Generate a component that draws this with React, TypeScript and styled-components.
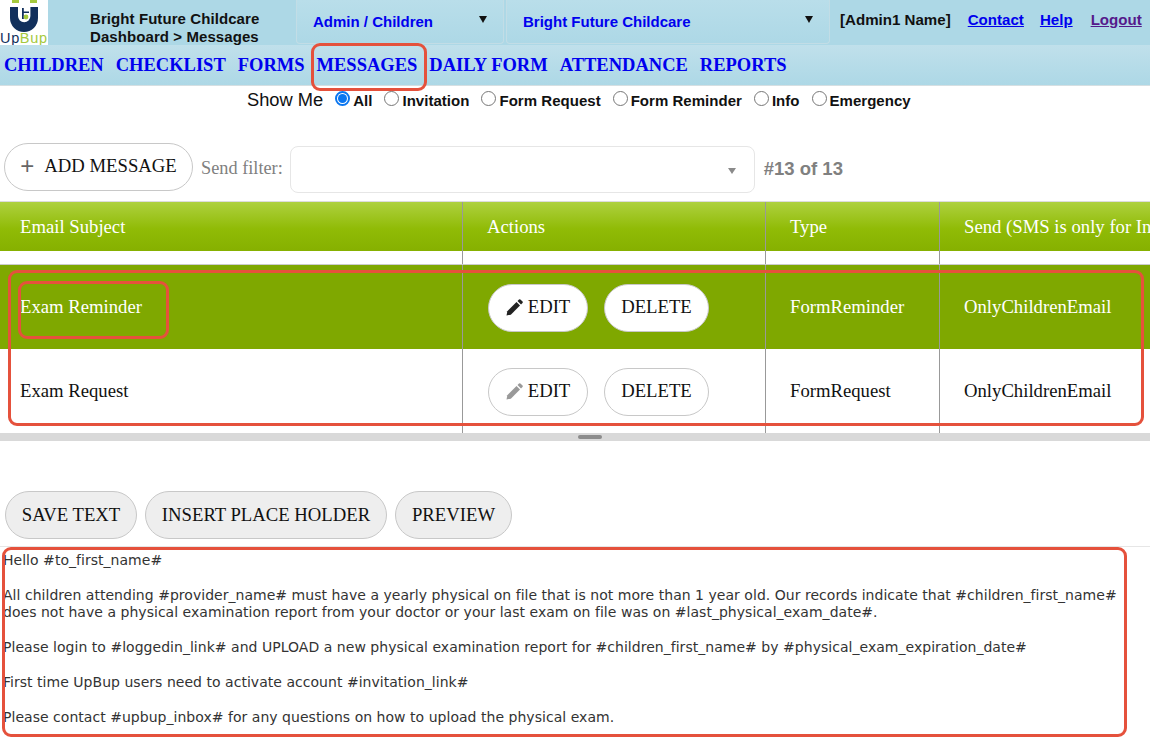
import React from 'react';
import styled, { createGlobalStyle } from 'styled-components';

const Global = createGlobalStyle`
  html, body { margin: 0; padding: 0; background: #fff; }
  body { width: 1150px; height: 747px; overflow: hidden; font-family: "Liberation Serif", serif; }
`;
const Page = styled.div`position: relative; width: 1150px; height: 747px; overflow: hidden;`;
const TopBar = styled.header`display: flex; height: 45px; background: #add8e6; font-family: "Liberation Sans", sans-serif; font-weight: 700; font-size: 15px;`;
const LogoBox = styled.div`width: 48px; height: 45px; background: #fff; flex: none; display: flex; align-items: flex-start; justify-content: center;`;
const Crumbs = styled.div`width: 206px; margin-left: 42px; padding-top: 10px; line-height: 18px; color: #111; flex: none; font-size: 15px; letter-spacing: 0.08px;`;
const Select = styled.div<{ $w: number }>`
  width: ${p => p.$w}px; height: 44px; box-sizing: border-box; flex: none; margin-right: 2px;
  display: flex; align-items: center; justify-content: space-between;
  padding: 0 16px 0 16px; color: #0000ee; border: 1px solid #c2dde6; border-top: 0; border-radius: 0 0 4px 4px;
  background: linear-gradient(#b9deea, #add8e6); font-size: 15px;
`;
const Caret = styled.span`width: 0; height: 0; border-left: 4.5px solid transparent; border-right: 4.5px solid transparent; border-top: 7px solid #111; margin-top: -5px;`;
const UserArea = styled.div`display: flex; align-items: center; height: 38px; margin-left: 8px; font-size: 15.1px; color: #111; white-space: nowrap;`;
const TopLink = styled.a<{ $visited?: boolean; $gap: number }>`margin-left: ${p => p.$gap}px; color: ${p => p.$visited ? '#551a8b' : '#0000ee'}; text-decoration: underline;`;
const Nav = styled.nav`
  height: 41px; display: flex; align-items: center; gap: 12px; padding: 0 0 0 4px; box-sizing: border-box;
  background: linear-gradient(#c0e0eb, #add8e6); border-bottom: 1px solid #d5dfe2;
  font-weight: 700; font-size: 18.5px; color: #0000ee; white-space: nowrap;
`;
const Filter = styled.div`
  height: 28px; display: flex; align-items: center; padding-left: 247px; font-family: "Liberation Sans", sans-serif;
  font-size: 15px; font-weight: 700; color: #111; white-space: nowrap; letter-spacing: 0.03px;
`;
const ShowMe = styled.span`font-size: 18.3px; font-weight: 400; margin-right: 12px; letter-spacing: 0;`;
const Radio = styled.span<{ $on?: boolean }>`
  width: 15px; height: 15px; box-sizing: border-box; border-radius: 50%; flex: none; margin: -3px 3px 0 0;
  border: ${p => p.$on ? '2px solid #0a76f0' : '1px solid #777'}; background: #fff;
  display: inline-flex; align-items: center; justify-content: center;
  &::after { content: ''; width: 9px; height: 9px; border-radius: 50%; background: ${p => p.$on ? '#0a76f0' : 'transparent'}; }
`;
const RadioLabel = styled.span`margin-right: 12px;`;
const Toolbar = styled.div`height: 48px; margin-top: 29px; padding-left: 4px; display: flex; align-items: center;`;
const Pill = styled.button<{ $grey?: boolean; $w: number }>`
  width: ${p => p.$w}px; height: 48px; flex: none; padding: 0 0 ${p => p.$grey ? 0 : 2}px; box-sizing: border-box;
  border: 1px solid #c8c8c8; border-radius: 24px; background: ${p => p.$grey ? '#eeeeee' : '#fff'};
  font-family: "Liberation Serif", serif; font-size: 18.7px; color: #111; white-space: nowrap;
  display: inline-flex; align-items: center; justify-content: center; gap: 5px;
`;
const Plus = styled.span`color: #666; font-size: 24px; line-height: 20px; margin-right: 5px; font-family: "Liberation Sans", sans-serif; font-weight: 300;`;
const FilterLabel = styled.span`font-size: 18.3px; color: #808080; margin: 3px 7px 0 8px;`;
const FilterBox = styled.div`
  width: 465px; height: 47px; box-sizing: border-box; border: 1px solid #e6e6e6; border-radius: 8px;
  display: flex; align-items: center; justify-content: flex-end; padding-right: 18px; margin-top: 4px;
`;
const SmallCaret = styled.span`width: 0; height: 0; border-left: 4.5px solid transparent; border-right: 4.5px solid transparent; border-top: 6px solid #8a8a8a; margin-top: 3px;`;
const Count = styled.span`font-family: "Liberation Sans", sans-serif; font-weight: 700; font-size: 18.5px; color: #808080; margin: 3px 0 0 9px; white-space: nowrap;`;
const Columns = 'grid-template-columns: 462px 303px 174px 300px;';
const TableHead = styled.div`
  display: grid; ${Columns} height: 50px; margin-top: 10px; box-sizing: border-box; border-top: 1px solid #ddd;
  background: linear-gradient(#aed13f, #90bb06 55%, #86b000); color: #fff; font-size: 18.7px;
`;
const Cell = styled.div`
  display: flex; align-items: center; gap: 16px; padding-left: 20px; box-sizing: border-box;
  border-left: 1px solid #999; white-space: nowrap; overflow: hidden;
  &:first-child { border-left: 0; }
  &:nth-child(n+2) { padding-left: 24px; }
`;
const ActionCell = styled(Cell)`
  &:nth-child(n+2) { padding-left: 25px; padding-top: 2px; }
`;
const Spacer = styled.div`
  display: grid; ${Columns} height: 14px; box-sizing: border-box; border-bottom: 1px solid #ccc;
`;
const Row = styled.div<{ $active?: boolean }>`
  display: grid; ${Columns} height: 84px; font-size: 18.7px;
  background: ${p => p.$active ? '#7fa800' : '#fff'}; color: ${p => p.$active ? '#fff' : '#111'};
`;
const Splitter = styled.div`height: 8px; background: #d9d9d9; display: flex; justify-content: center;`;
const Grip = styled.span`width: 24px; height: 4px; border-radius: 2px; background: #8c8c8c; margin-top: 2px; margin-left: 29px;`;
const ActionBar = styled.div`height: 48px; margin-top: 50px; padding-left: 5px; display: flex; gap: 8px;`;
const Rule = styled.div`height: 1px; background: #e6e6e6; margin-top: 7px;`;
const Editor = styled.div`
  padding: 5px 0 0 3px; font-family: "DejaVu Sans", sans-serif; font-size: 14px; line-height: 17.4px; color: #333;
  letter-spacing: 0.03px; white-space: pre;
`;
const Annotation = styled.div<{ $x: number; $y: number; $w: number; $h: number }>`
  position: absolute; left: ${p => p.$x}px; top: ${p => p.$y}px; width: ${p => p.$w}px; height: ${p => p.$h}px;
  box-sizing: border-box; border: 3px solid #e5513c; border-radius: 9px; pointer-events: none;
`;

const Logo = () => (
  <svg width="48" height="45" viewBox="0 0 48 45">
    <path d="M12 0h7v3h-7zM30 0h7v3h-7z" fill="#a5c93d" />
    <path d="M10 7h8v9a6.2 6.2 0 0 0 12.4 0V7H38v11a13 13 0 0 1-28 0z" fill="#12305c" />
    <path d="M22 8h1.8v3.5H29v1.6h-5.2v6H22z" fill="#12305c" />
    <circle cx="26" cy="17" r="2.4" fill="#a5c93d" />
    <text x="0" y="43" fontFamily="Liberation Sans, sans-serif" fontWeight="400" fontSize="14.5" textLength="47" stroke="none" fill="#12305c">Up<tspan fill="#a5c93d">Bup</tspan></text>
  </svg>
);
const Pencil = ({ color }: { color: string }) => (
  <svg width="17" height="17" viewBox="0 0 17 17" fill={color}>
    <path d="M0.5 16.5l0.8-4.3L10.5 3l3.5 3.5L4.8 15.7z" />
    <path d="M11.5 2l1.5-1.5a1 1 0 0 1 1.4 0l2.1 2.1a1 1 0 0 1 0 1.4L15 5.5z" />
  </svg>
);
const radios = ['Invitation', 'Form Request', 'Form Reminder', 'Info', 'Emergency'];
const lines = `Hello #to_first_name#

All children attending #provider_name# must have a yearly physical on file that is not more than 1 year old. Our records indicate that #children_first_name#
does not have a physical examination report from your doctor or your last exam on file was on #last_physical_exam_date#.

Please login to #loggedin_link# and UPLOAD a new physical examination report for #children_first_name# by #physical_exam_expiration_date#

First time UpBup users need to activate account #invitation_link#

Please contact #upbup_inbox# for any questions on how to upload the physical exam.`;

const MessageRow = ({ subject, type, active }: { subject: string; type: string; active?: boolean }) => (
  <Row $active={active}>
    <Cell>{subject}</Cell>
    <ActionCell>
      <Pill $w={100}><Pencil color={active ? '#222' : '#999'} />EDIT</Pill>
      <Pill $w={105}>DELETE</Pill>
    </ActionCell>
    <Cell>{type}</Cell>
    <Cell>OnlyChildrenEmail</Cell>
  </Row>
);

export default function App() {
  return (
    <Page>
      <Global />
      <TopBar>
        <LogoBox><Logo /></LogoBox>
        <Crumbs>Bright Future Childcare<br />Dashboard &gt; Messages</Crumbs>
        <Select $w={208}>Admin / Children<Caret /></Select>
        <Select $w={324}>Bright Future Childcare<Caret /></Select>
        <UserArea>
          [Admin1 Name]
          <TopLink $gap={17}>Contact</TopLink>
          <TopLink $gap={16}>Help</TopLink>
          <TopLink $gap={18} $visited>Logout</TopLink>
        </UserArea>
      </TopBar>
      <Nav>
        <span>CHILDREN</span><span>CHECKLIST</span><span>FORMS</span><span>MESSAGES</span><span>DAILY FORM</span><span>ATTENDANCE</span><span>REPORTS</span>
      </Nav>
      <Filter>
        <ShowMe>Show Me</ShowMe>
        <Radio $on /><RadioLabel>All</RadioLabel>
        {radios.map(r => <React.Fragment key={r}><Radio /><RadioLabel>{r}</RadioLabel></React.Fragment>)}
      </Filter>
      <Toolbar>
        <Pill $w={189}><Plus>+</Plus>ADD MESSAGE</Pill>
        <FilterLabel>Send filter:</FilterLabel>
        <FilterBox><SmallCaret /></FilterBox>
        <Count>#13 of 13</Count>
      </Toolbar>
      <TableHead>
        <Cell>Email Subject</Cell><Cell>Actions</Cell><Cell>Type</Cell><Cell>Send (SMS is only for Invitation)</Cell>
      </TableHead>
      <Spacer><Cell /><Cell /><Cell /><Cell /></Spacer>
      <MessageRow active subject="Exam Reminder" type="FormReminder" />
      <MessageRow subject="Exam Request" type="FormRequest" />
      <Splitter><Grip /></Splitter>
      <ActionBar>
        <Pill $grey $w={132}>SAVE TEXT</Pill>
        <Pill $grey $w={242}>INSERT PLACE HOLDER</Pill>
        <Pill $grey $w={117}>PREVIEW</Pill>
      </ActionBar>
      <Rule />
      <Editor>{lines}</Editor>
      <Annotation $x={311} $y={43} $w={116} $h={48} />
      <Annotation $x={18} $y={281} $w={151} $h={58} />
      <Annotation $x={8} $y={270} $w={1136} $h={156} />
      <Annotation $x={2} $y={547} $w={1125} $h={190} />
    </Page>
  );
}
